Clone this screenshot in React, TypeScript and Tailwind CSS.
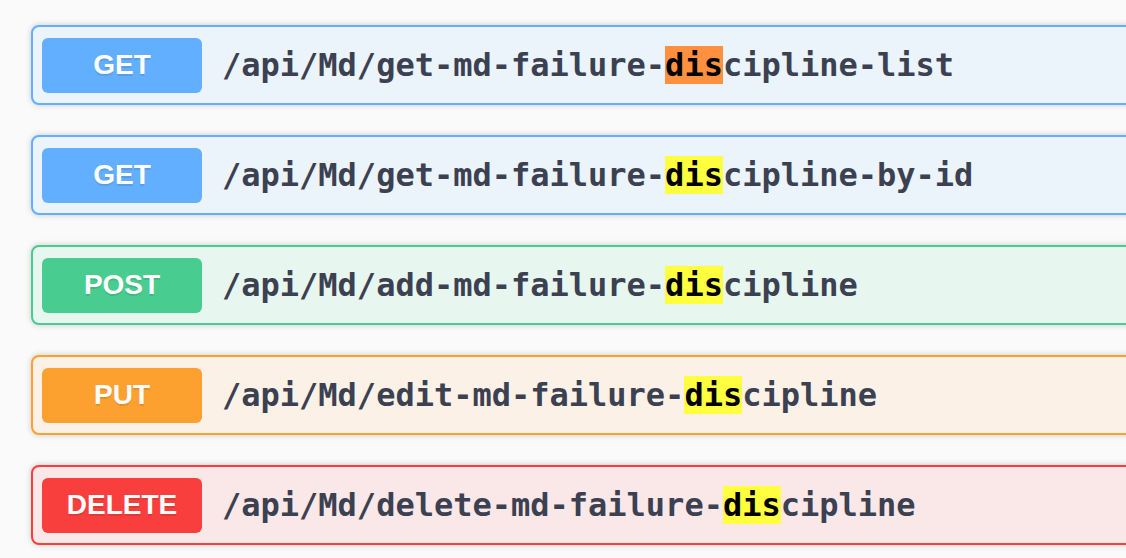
type Method = "GET" | "POST" | "PUT" | "DELETE";

interface Endpoint {
  method: Method;
  before: string;
  after: string;
  current?: boolean;
}

const methodStyles: Record<Method, { box: string; badge: string }> = {
  GET: {
    box: "border-[#61affe] bg-[#ebf3fb]",
    badge: "bg-[#61affe]",
  },
  POST: {
    box: "border-[#49cc90] bg-[#e8f6f0]",
    badge: "bg-[#49cc90]",
  },
  PUT: {
    box: "border-[#fca130] bg-[#fbf1e6]",
    badge: "bg-[#fca130]",
  },
  DELETE: {
    box: "border-[#f93e3e] bg-[#fae7e7]",
    badge: "bg-[#f93e3e]",
  },
};

const endpoints: Endpoint[] = [
  { method: "GET", before: "/api/Md/get-md-failure-", after: "cipline-list", current: true },
  { method: "GET", before: "/api/Md/get-md-failure-", after: "cipline-by-id" },
  { method: "POST", before: "/api/Md/add-md-failure-", after: "cipline" },
  { method: "PUT", before: "/api/Md/edit-md-failure-", after: "cipline" },
  { method: "DELETE", before: "/api/Md/delete-md-failure-", after: "cipline" },
];

export default function App() {
  return (
    <div className="h-[558px] w-full overflow-hidden bg-[#fafafa] pt-[25px] pl-[31px]">
      <div className="flex w-[1200px] flex-col gap-[30px]">
        {endpoints.map((ep, i) => (
          <OperationRow key={i} endpoint={ep} />
        ))}
      </div>
    </div>
  );
}

function OperationRow({ endpoint }: { endpoint: Endpoint }) {
  const styles = methodStyles[endpoint.method];

  return (
    <div
      className={`flex h-[80px] items-center rounded-[8px] border-2 px-[9px] shadow-[0_0_6px_rgba(0,0,0,0.19)] ${styles.box}`}
    >
      {/* Method badge */}
      <div
        className={`flex h-[55px] w-[160px] items-center justify-center rounded-[6px] font-['Liberation_Sans',Arial,sans-serif] text-[28px] font-bold text-white [text-shadow:0_2px_0_rgba(0,0,0,0.1)] ${styles.badge}`}
      >
        {endpoint.method}
      </div>

      {/* Path */}
      <span className="pl-[20px] font-['DejaVu_Sans_Mono',monospace] text-[32px] font-bold whitespace-nowrap text-[#3b4151]">
        {endpoint.before}
        <mark
          className={`text-black ${endpoint.current ? "bg-[#ff9040]" : "bg-[#ffff40]"}`}
        >
          dis
        </mark>
        {endpoint.after}
      </span>
    </div>
  );
}
